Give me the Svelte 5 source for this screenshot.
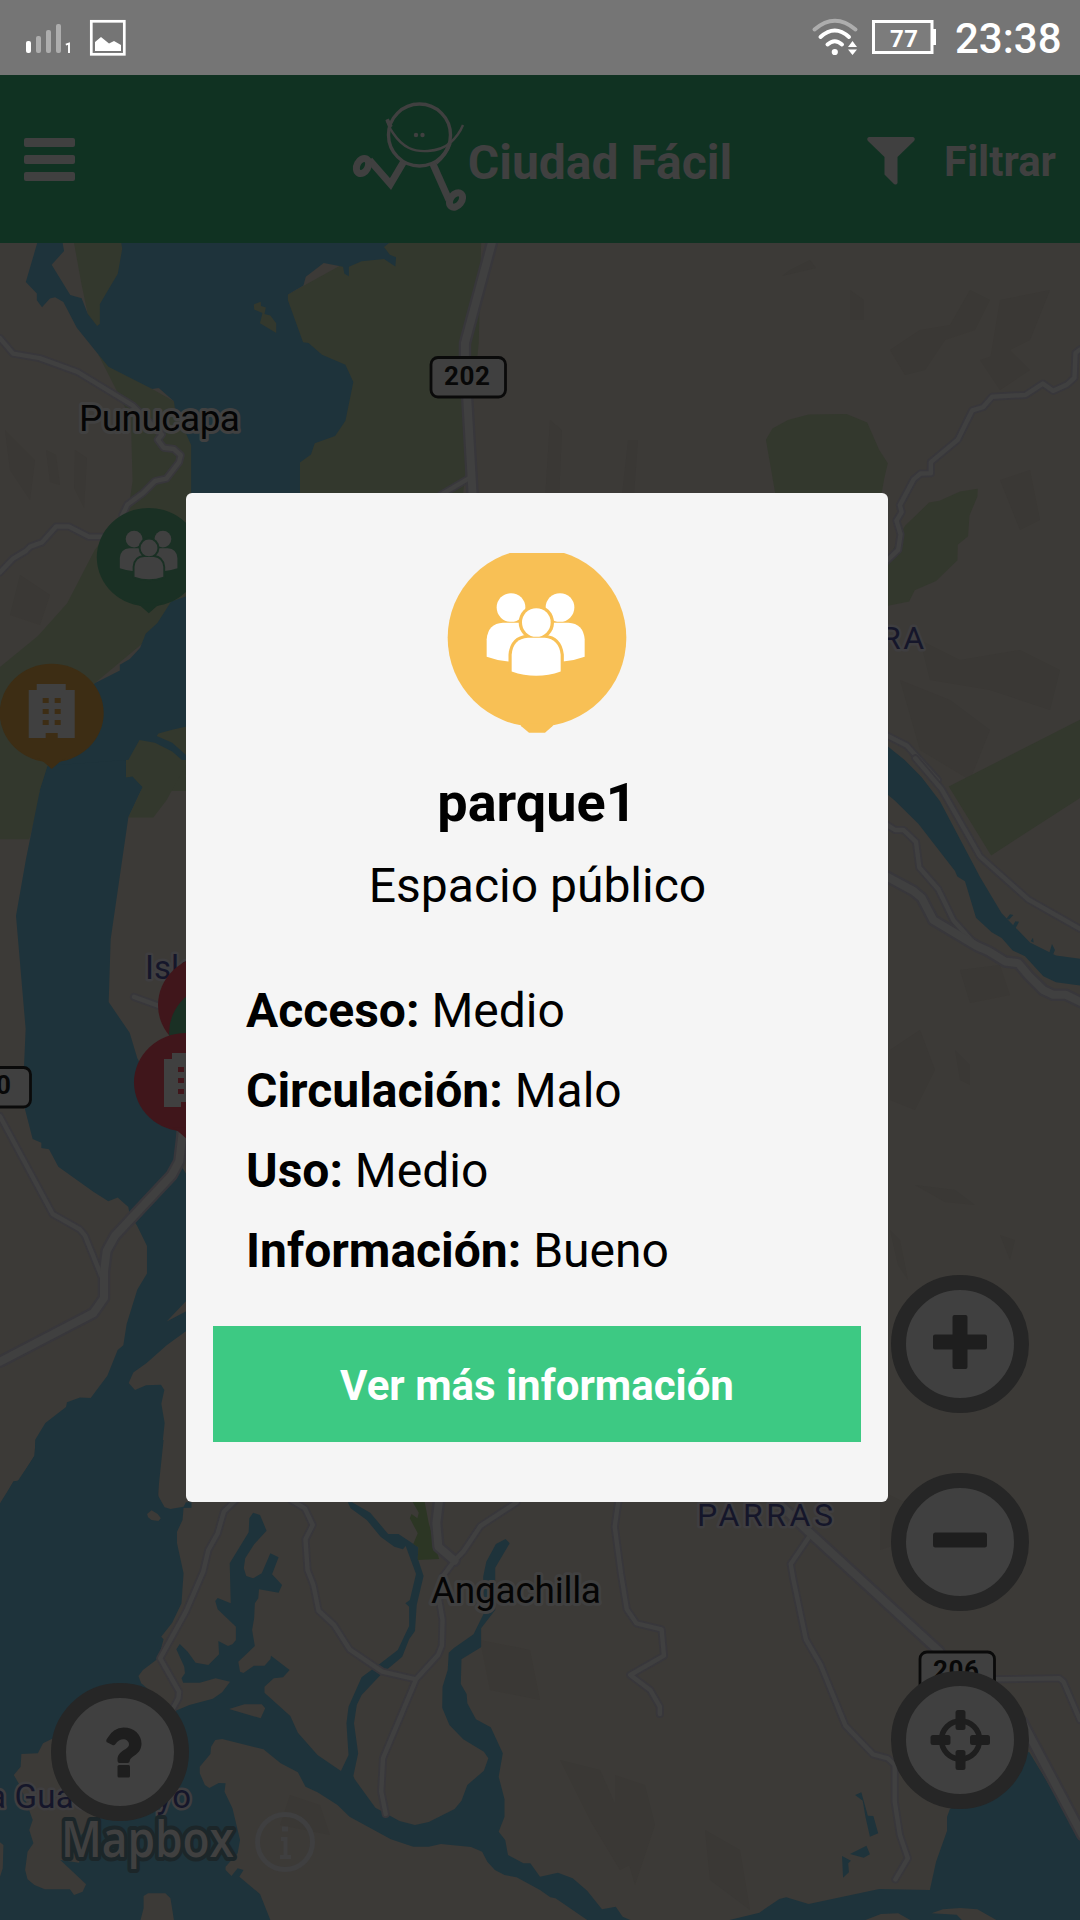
<script>
  const place = {
    name: 'parque1',
    type: 'Espacio público',
    ratings: [
      { label: 'Acceso', value: 'Medio' },
      { label: 'Circulación', value: 'Malo' },
      { label: 'Uso', value: 'Medio' },
      { label: 'Información', value: 'Bueno' }
    ]
  };
</script>

{#snippet people(bg, fg)}
  <g fill={fg}>
    <circle cx="274" cy="232" r="43" />
    <circle cx="421" cy="232" r="43" />
    <path d="M201 380V328Q205 280 250 278H300L345 320V394H266Q233 392 201 380z" />
    <path d="M495 380V328Q491 280 446 278H396L351 320V394H430Q463 392 495 380z" />
    <circle cx="350" cy="277" r="53" fill={bg} />
    <path d="M276 424V374Q280 326 325 323H375Q418 327 423 374V424Q350 450 276 424z" stroke={bg} stroke-width="19" />
    <path d="M276 424V374Q280 326 325 323H375Q418 327 423 374V424Q350 450 276 424z" />
    <circle cx="350" cy="277" r="43" />
  </g>
{/snippet}

{#snippet building(bg)}
  <path d="M-23 -23H-15V-29H14V-23H23V25H-23z" fill="#404040" />
  <path d="M-9 -15h6v5h-6zM3 -15h6v5h-6zM-9 -4h6v5h-6zM3 -4h6v5h-6zM-9 7h6v5h-6zM3 7h6v5h-6zM-6 20h12v5h-12z" fill={bg} />
{/snippet}

{#snippet pin(x, y, color)}
  <g transform="translate({x} {y})" fill={color}>
    <ellipse rx="52" ry="49.3" />
    <path d="M-14 45L-8 49L0 56L8 49L14 45z" />
  </g>
{/snippet}

<div class="screen">
  <div class="status">
    <svg class="st" width="130" height="75" viewBox="0 0 130 75">
      <rect x="26" y="41" width="5" height="12" rx="2" fill="#fff" />
      <rect x="36" y="36" width="5" height="17" rx="2" fill="#adadad" />
      <rect x="46" y="30" width="5" height="23" rx="2" fill="#adadad" />
      <rect x="56" y="24" width="5" height="29" rx="2" fill="#adadad" />
      <path d="M65.8 44.6L69 43.6V53" fill="none" stroke="#fff" stroke-width="1.9" />
      <rect x="91.3" y="21.3" width="33" height="33" fill="none" stroke="#fff" stroke-width="2.7" />
      <path d="M95 51V42L101 37L109 43.5L114 41L121 45V51z" fill="#fff" />
    </svg>
    <svg class="st" width="130" height="75" viewBox="811 0 130 75">
      <g fill="none" stroke="#fff" stroke-width="4" stroke-linecap="round">
        <path d="M814.500 29.500Q834.800 12 855.500 29.500" stroke="#adadad" />
        <path d="M820.500 37Q834.800 24 849 37" />
        <path d="M827.500 44.500Q834.800 38 842 44.500" />
      </g>
      <circle cx="834.800" cy="52" r="3.100" fill="#fff" />
      <path d="M848 47L852.500 41L857 47zM848 49.500L852.500 55L857 49.500z" fill="#fff" />
      <rect x="873.500" y="21.500" width="58.500" height="31" fill="#7c7c7c" stroke="#fff" stroke-width="3" />
      <path d="M932 29h4v16h-4z" fill="#fff" />
      <text x="890" y="47" class="bat" textLength="28">77</text>
    </svg>
    <span class="clock">23:38</span>
  </div>

  <header>
    <svg width="51" height="43" viewBox="0 0 51 43" fill="#404040">
      <rect width="51" height="9" rx="2" /><rect y="17" width="51" height="9" rx="2" /><rect y="34" width="51" height="9" rx="2" />
    </svg>
    <div class="brand">
      <svg width="116" height="112" viewBox="0 0 116 112">
        <g fill="none" stroke="#404040">
          <ellipse cx="67.500" cy="33" rx="31" ry="31" stroke-width="3.400" />
          <path d="M35 17.500Q36 24 41 31C51 46 62 50 76 49Q90 48 98 41Q107 33 111 23" stroke-width="2.400" />
          <path d="M35 17.500L39 25M98 41Q94 53 84 61" stroke-width="3.800" />
          <path d="M51.500 60L38.500 82L17.500 58" stroke-width="7" />
          <ellipse cx="10.500" cy="64" rx="5.500" ry="8" stroke-width="7" transform="rotate(28 10.500 64)" />
          <path d="M80.500 61L97 98" stroke-width="7" />
          <ellipse cx="104" cy="98" rx="5.500" ry="8" stroke-width="7" transform="rotate(38 104 98)" />
        </g>
        <circle cx="64" cy="33" r="2.200" fill="#404040" /><circle cx="70.500" cy="33" r="2.200" fill="#404040" />
      </svg>
      <h1>Ciudad Fácil</h1>
    </div>
    <div class="filter">
      <svg width="48" height="48" viewBox="0 0 48 48"><path d="M2 0H46Q49 1 47 4L30.500 20V46Q29.500 48.500 27 47L17.500 37.500V20L1 4Q-1 1 2 0z" fill="#404040" /></svg>
      <span>Filtrar</span>
    </div>
  </header>

  <main>
    <svg class="map" width="1080" height="1677" viewBox="0 243 1080 1677">
      <rect y="243" width="1080" height="1677" fill="#3c3a37" />
      <!-- terrain shading -->
      <g fill="#3a3835">
        <path d="M550 420l12 10-3 70h-14zM628 440h10l-4 55h-12zM790 270l20-10 6 8-34 8zM850 290l14 10v20h-14zM890 350l30-20 30-5 20-35 20 10-15 30-30 10-20 30-20 5zM1000 300l50-10-20 50-40 20zM980 360l30-10 20 20-30 20z" />
        <path d="M1000 480l30-10 10 50-20 10zM920 640l40 20 60-10 40 20-10 40-60-20-60-10zM900 680l50 20 40 30-20 50-50-30zM960 970l40-5 10 30-40 8zM890 1050l30-20 15 40-20 40-25-10zM955 1050l15 15v20l-10-5zM915 1185l40 5 20 15-30-3zM890 1230l10 10 8 40-10-15zM1000 1235l15 5-5 20z" />
        <path d="M5 430l30 30-5 40-20-30zM46 450l10 5 4 30-10-3zM75 450l12 8-3 50-10-20zM20 575l30 20-10 30-30-10zM560 1760l40 10 40 90-20 10-30-50zM615 1775l30 10 10 40-20 60-20-70zM705 1830l35 20 10 60-40-30zM480 1640l50 10 10 50-50-10zM290 1795l30 10 10 30-50-10zM880 1490l40 20 30-10-10 30-60 20z" />
      </g>

      <!-- north west bay and river -->
      <g transform="translate(0 240) scale(.34439)">
        <path fill="#33382d" d="M285 332L335 430L380 520L385 700L375 770L275 900L195 1055L110 1150L0 1240V1740L85 1740L130 1568L275 1287L560 1050V595L505 468L442 433z" />
        <path fill="#33382d" d="M1130 9H1397L1390 300L1345 735H871V646L800 400L836 158L996 70z" />
        <path class="water" d="M108 9L75 122L107 155V175L122 195L145 170L160 166L184 180L223 255L285 332L315 368L442 433L461 430L505 468L508 490L555 595V1030L497 1050L457 1112L423 1143L407 1184L377 1217L348 1233V1250L275 1287L180 1450L137 1530L115 1600H600V800H871V646L903 623L914 590L973 569L1003 525L1026 412L1003 362L935 333L896 299L880 297L836 175V158L881 132L888 107L940 67L996 78L1000 98L1013 105V78L1050 62L1115 55L1148 77L1150 50L1132 43L1115 20L1130 9z" />
        <path fill="#3c3a37" d="M182 9L186 32L150 72L204 160L237 169L255 215L260 100L240 9z" />
        <path fill="#33382d" d="M215 9L237 130L255 215L282 250L290 243V186L342 98L355 25L352 9zM737 187L757 179L758 192L772 196L768 215L785 219L802 242V270L755 242L762 212L738 202zM455 1440L460 1433L500 1422L545 1412V1500L500 1460zM405 1452L450 1460L500 1485L540 1520V1600H385V1555L365 1558V1523z" />
        <path class="case" d="M0 285L38 330L115 343L225 383L385 480L470 565L458 580L475 603L505 607L525 625L520 645L483 693L450 700L415 735L370 768L355 800M0 965L38 925L75 903L88 890L122 878L163 832H200L258 862H300M1280 740L1365 690" />
        <path class="case major" d="M1428 9L1350 300V340L1372 735" />
        <path class="line" d="M0 285L38 330L115 343L225 383L385 480L470 565L458 580L475 603L505 607L525 625L520 645L483 693L450 700L415 735L370 768L355 800M0 965L38 925L75 903L88 890L122 878L163 832H200L258 862H300M1280 740L1365 690" />
        <path class="line major" d="M1428 9L1350 300V340L1372 735" />
      </g>

      <!-- north east hills -->
      <g transform="translate(540 240) scale(.34439)">
        <path fill="#33382d" d="M656 580L675 547L720 523L780 507L890 505L950 530L985 610L1010 648L1000 690L992 735H683zM1060 830L1130 762L1160 757L1220 730L1271 722L1270 745L1247 800L1243 860L1213 885L1212 930L1150 990L1088 1017L1072 1050L1010 1062V930zM1568 1393L1187 1587L1310 1787L1568 1620z" />
        <path class="case" d="M1568 318L1555 328L1552 400L1530 420L1490 438L1460 417L1410 450L1313 455L1287 485L1255 495L1213 580L1135 645V677L1105 678L1085 695L1045 770L1050 790L1035 815L1047 855L1040 900L1000 938M1000 1435L1065 1468L1155 1568" />
        <path class="line" d="M1568 318L1555 328L1552 400L1530 420L1490 438L1460 417L1410 450L1313 455L1287 485L1255 495L1213 580L1135 645V677L1105 678L1085 695L1045 770L1050 790L1035 815L1047 855L1040 900L1000 938M1000 1435L1065 1468L1155 1568" />
      </g>

      <!-- western channel -->
      <g transform="translate(0 760) scale(.33333 .47192)">
        <path class="water" d="M145 12L118 70L78 210L48 330L77 570L72 650L75 740L98 803L124 811V822L147 825L175 862L280 915L325 935L353 927L385 947L388 960L412 988L441 1030V1088L412 1122L380 1195L370 1240L353 1250L322 1305L272 1352L240 1351L201 1361L198 1371L136 1405L106 1440L104 1473L58 1527L40 1529L0 1580H475V1530L494 1405L484 1364L493 1335L483 1324L438 1325L405 1335L386 1320L400 1298L440 1278L500 1240L570 1204V1164L500 1190L570 1138V890L548 865L530 830V780L412 632L389 578L326 513L332 380L385 122L428 57L398 35L378 37V0z" />
        <path fill="#33382d" d="M378 0V37L398 35L428 57L385 122H460L500 85L558 10V0z" />
        <path class="case" d="M0 755L158 962L240 995L255 1008L305 1095M402 502L480 522" />
        <path class="case major" d="M0 1275L280 1172L312 1140V1085L320 1040L345 1008L515 880L538 850L548 790" />
        <path class="line" d="M0 755L158 962L240 995L255 1008L305 1095M402 502L480 522" />
        <path class="line major" d="M0 1275L280 1172L312 1140V1085L320 1040L345 1008L515 880L538 850L548 790" />
      </g>

      <!-- eastern river -->
      <g transform="translate(870 760) scale(.33333 .34439)">
        <path class="water" d="M50 -42L104 0L155 50L210 120L330 340L395 445L480 530L558 568L630 577V655L558 645L520 628L465 570L428 553L395 517L365 500L318 458L285 352L262 338L255 322L145 185L75 118L50 98zM410 460L420 448L430 450L417 464zM428 482L436 468L447 470L437 488zM482 526L489 516L491 530zM538 560L546 534L555 552L548 568z" />
        <path class="case" d="M136 -5L215 85L330 280L475 405L630 490M50 188L75 203H100L138 238L148 312L205 375L250 465L310 530" />
        <path class="case major" d="M50 338L130 380L155 400L190 465L320 540L355 555L405 585L445 590L475 625L520 668L550 682H588L635 704" />
        <path class="line" d="M136 -5L215 85L330 280L475 405L630 490M50 188L75 203H100L138 238L148 312L205 375L250 465L310 530" />
        <path class="line major" d="M50 338L130 380L155 400L190 465L320 540L355 555L405 585L445 590L475 625L520 668L550 682H588L635 704" />
      </g>

      <!-- southern estuary -->
      <g transform="translate(0 1440) scale(.34439 .33333)">
        <path class="water" d="M104 0L100 48L52 122L40 124L0 190V1440H785L755 1362L695 1310L707 1290L690 1285L672 1308L655 1290V1280L690 1240L697 1200L675 1105L652 1055L655 1030L635 1029L608 1044L595 1035L580 1000V980L611 942L613 920L625 900L645 897L765 928L815 970L865 997L887 1040L922 1057L980 1095L1015 1130L1135 1198L1200 1220H1245L1280 1212L1368 1221L1400 1235L1415 1265L1437 1290L1465 1305L1500 1312L1568 1350L1598 1372L1613 1375L1705 1440H1830L1808 1430L1788 1400L1748 1408L1705 1352L1663 1315L1620 1298L1568 1310L1540 1270H1520L1475 1245L1467 1200L1448 1175L1465 1130V1078L1448 1010L1460 940L1425 862L1382 838L1357 790L1355 762L1338 732L1340 658L1397 622V565L1438 510V383L1480 310L1468 297L1440 312L1412 365L1403 410L1405 520L1375 583L1317 625L1303 638L1300 690L1285 740L1284 803L1305 855L1345 898L1405 935L1418 955L1405 992L1357 1035L1340 1082L1320 1107L1245 1146L1205 1155L1160 1143L1090 1103L1030 1018L1026 1008L1040 940L1028 850L1036 795L1050 765L1105 705L1168 650L1188 598L1205 573L1210 495L1230 408L1213 355L1215 322L1157 282H1127L1075 218L1022 187H1010L1018 205L1065 240L1105 290L1145 320L1170 328L1178 318L1208 402L1190 480L1177 490L1188 500V558L1155 630L1105 670L1050 712L1012 800L1006 850L1012 945L990 993L922 945L865 878L843 828L768 758V740L795 715L822 712L841 690L787 647L785 658L768 677H737L707 699L697 695L692 665L740 618L732 570L738 535L740 490L750 475L752 448L809 458L819 435L790 403L809 352L785 340L760 400L735 415L715 408L708 385L712 355L738 313L774 272L755 225L735 218L724 235L722 277L667 370L670 490L632 474L625 483L632 508L685 560V600L675 613L662 618L634 603L636 643L605 675L568 668L545 635L522 612L512 628L535 680L537 700L527 715L532 728H580L626 715L668 725L645 757L618 776L550 795L515 810H500L410 730L402 708L415 690L460 655L475 598L468 590L500 548L527 490L533 400L514 310V275L530 240L533 204L556 203V187H540L533 200L495 207L478 202L458 165L475 0z" />
        <path fill="#3c3a37" d="M427 222L440 211L458 222L467 235L460 243L440 240L430 232zM665 807L710 793H760L770 805L757 835zM150 897L125 910L110 940L62 942L60 980L40 1005L60 1040L95 1140L85 1170L97 1210L80 1235L73 1290L80 1318L100 1335L130 1348H203L215 1365L240 1355L250 1333L175 1260L230 1268V1190L290 1130L300 1000L200 880zM0 1207L10 1215L8 1285L0 1310zM417 1368L430 1360H480L495 1375L505 1440H408L417 1405z" />
        <path fill="#2c3624" d="M1195 180H1232L1245 250L1275 357L1213 360L1215 322L1200 312L1213 280L1190 235L1195 222L1212 235L1216 218z" />
        <path class="case" d="M685 180L650 215L632 280L605 330L590 395L540 515L465 655L520 755L518 775L500 810M845 180L885 205L908 255L887 298L893 390L910 435L925 512L970 555L1015 628L1110 695L1208 718M1500 187L1395 258L1345 335L1320 362L1285 410L1275 480L1285 540L1283 617L1272 645L1208 718L1112 955L1107 1055L1120 1122" />
        <path class="case major" d="M1275 180L1267 250L1273 320L1320 362" />
        <path class="line" d="M685 180L650 215L632 280L605 330L590 395L540 515L465 655L520 755L518 775L500 810M845 180L885 205L908 255L887 298L893 390L910 435L925 512L970 555L1015 628L1110 695L1208 718M1500 187L1395 258L1345 335L1320 362L1285 410L1275 480L1285 540L1283 617L1272 645L1208 718L1112 955L1107 1055L1120 1122" />
        <path class="line major" d="M1275 180L1267 250L1273 320L1320 362" />
      </g>

      <!-- south east shore -->
      <g transform="translate(540 1440) scale(.34439 .33333)">
        <path class="water" d="M1190 1108L1182 1130V1172L1150 1265L1132 1350L985 1347L780 1392L715 1372L695 1377L637 1418L550 1440H1568V1190L1420 935L1300 1000zM915 1065L933 1057L952 1127L968 1128L982 1180L958 1190L945 1130L937 1082zM900 1242L948 1217L958 1243L940 1253zM877 1248L903 1262L895 1270L897 1297L880 1313z" />
        <path fill="#3c3a37" d="M945 1440L990 1422L1040 1420L1075 1440zM1137 1420L1170 1408L1220 1404L1270 1408L1325 1440H1225L1210 1424z" />
        <path class="case" d="M228 180L217 260L235 400L252 508L280 550L353 568L360 647L262 705L320 750L348 800V822M785 285L728 372L735 415L772 598L815 675L887 857L967 943L1010 955L1030 975V1085L1045 1185L1068 1255L1032 1318M1325 718L1508 715L1520 725L1568 840" />
        <path class="case major" d="M690 187L785 280L1160 635M1400 845L1575 1185" />
        <path class="line" d="M228 180L217 260L235 400L252 508L280 550L353 568L360 647L262 705L320 750L348 800V822M785 285L728 372L735 415L772 598L815 675L887 857L967 943L1010 955L1030 975V1085L1045 1185L1068 1255L1032 1318M1325 718L1508 715L1520 725L1568 840" />
        <path class="line major" d="M690 187L785 280L1160 635M1400 845L1575 1185" />
      </g>

      <g class="shields">
        <rect x="431" y="357.500" width="74.500" height="39.500" rx="7" />
        <text x="444" y="384.500" textLength="46">202</text>
        <rect x="920" y="1652" width="74.500" height="39.500" rx="7" />
        <text x="933" y="1679" textLength="46">206</text>
        <rect x="-44" y="1067.500" width="74.500" height="39.500" rx="7" />
        <text x="-35" y="1094" textLength="46">200</text>
      </g>

      <g class="labels">
        <text x="79" y="430.500" textLength="161">Punucapa</text>
        <text x="431" y="1603" textLength="170">Angachilla</text>
        <g class="area">
          <text x="697" y="1526" textLength="136">PARRAS</text>
          <text x="881" y="649" textLength="43">RA</text>
          <text x="145" y="978.500" class="isle">Isla</text>
          <text x="-12" y="1808" textLength="203" class="isle">a Guacamayo</text>
        </g>
      </g>

      <!-- place markers -->
      {@render pin(210, 1005, '#40161b')}
      {@render pin(221, 1033, '#1a3024')}
      {@render pin(186, 1082.300, '#40161b')}
      <g transform="translate(187 1082)">{@render building('#40161b')}</g>
      {@render pin(51.700, 713, '#3d2d14')}
      <g transform="translate(51.700 713)">{@render building('#3d2d14')}</g>
      {@render pin(148.800, 557.300, '#1a3024')}
      <g transform="translate(148.800 555) scale(.196) translate(-349 -313)">{@render people('#1a3024', '#404040')}</g>

      <text class="mapbox" x="61" y="1857" textLength="173" lengthAdjust="spacingAndGlyphs">Mapbox</text>
      <g fill="none" stroke="#3f3f40" stroke-width="5">
        <circle cx="285" cy="1842" r="27.500" />
        <path d="M281 1839h4.500v16M280 1857h11" stroke-width="4" /><path d="M282 1829h6" />
      </g>
    </svg>

    <div class="controls">
      <button aria-label="Acercar"><svg width="60" height="60" viewBox="-30 -30 60 60"><path d="M-27 -7.500q0 -2 2 -2H-7.500V-27q0 -2 2 -2H5.500q2 0 2 2V-9.500H25q2 0 2 2V3.500q0 2 -2 2H7.500V23q0 2 -2 2H-5.500q-2 0 -2 -2V5.500H-25q-2 0 -2 -2z" /></svg></button>
      <button aria-label="Alejar"><svg width="60" height="60" viewBox="-30 -30 60 60"><rect x="-27" y="-9.500" width="54" height="15" rx="2.500" /></svg></button>
      <button aria-label="Mi ubicación">
        <svg width="60" height="60" viewBox="-30 -30 60 60"><circle cx=".5" r="19" fill="none" stroke="#1e1e1e" stroke-width="5.500" /><rect x="-4.500" y="-30" width="10" height="20" rx="2.500" /><rect x="-4.500" y="10" width="10" height="20" rx="2.500" /><rect x="-29.500" y="-5" width="20" height="10" rx="2.500" /><rect x="10" y="-5" width="20" height="10" rx="2.500" /></svg>
      </button>
    </div>
    <button class="help" aria-label="Ayuda">
      <svg width="60" height="60" viewBox="88.500 1722 60 60"><path d="M105 1742Q104 1740 106 1738Q112 1727.500 122 1727.500C133 1727.500 140 1735 140 1743.500C140 1755 128.500 1756 128.300 1761Q128 1763 126 1763H118Q116 1763 116 1760C116 1750 127.500 1750 127.500 1744.500C127.500 1738 118 1737 114 1744Q112.500 1746 111 1745z" /><rect x="116" y="1765" width="12.500" height="12.500" rx="1.500" /></svg>
    </button>
  </main>

  <section class="modal">
    <svg width="180" height="180" viewBox="82 69 540 539">
      <ellipse cx="352" cy="323" rx="268" ry="267" fill="#f8c055" />
      <path d="M300 580L305 588L328 608H376L398 588L405 580z" fill="#f8c055" />
      {@render people('#f8c055', '#fff')}
    </svg>
    <h2>{place.name}</h2>
    <p class="type">{place.type}</p>
    <ul>
      {#each place.ratings as r}
        <li><b>{r.label}:</b> {r.value}</li>
      {/each}
    </ul>
    <button class="more">Ver más información</button>
  </section>
</div>

<style>
  :global(body) { margin: 0; background: #3c3a37; }
  .screen { position: relative; width: 1080px; height: 1920px; overflow: hidden; display: flex; flex-direction: column; font-family: Roboto, sans-serif; }
  .status { flex: none; height: 75px; background: #757575; display: flex; align-items: center; box-sizing: border-box; padding-right: 19px; }
  .st { display: block; }
  .st + .st { margin-left: auto; }
  .bat { font: 700 24px Roboto, sans-serif; fill: #fff; }
  .clock { margin-left: 14px; width: 106px; color: #fff; font-size: 42px; font-weight: 500; line-height: 50px; padding-top: 3px; box-sizing: border-box; white-space: nowrap; }
  header { flex: none; height: 168px; box-sizing: border-box; padding: 0 24px; background: #103222; display: grid; grid-template-columns: 1fr auto 1fr; align-items: center; color: #404040; }
  .brand { display: flex; align-items: center; padding-left: 4px; }
  .brand svg { margin-top: -2px; }
  h1 { margin: 7px 0 0; font-size: 48px; line-height: 56px; font-weight: 700; white-space: nowrap; }
  .filter { display: flex; justify-content: flex-end; align-items: center; gap: 29px; font-size: 42px; font-weight: 700; line-height: 50px; }
  .filter svg { margin-top: 3px; }
  .filter span { margin-top: 5px; }
  main { position: relative; flex: 1; overflow: hidden; }
  .map { display: block; }
  .water { fill: #1e333b; }
  .case, .line { fill: none; stroke-linejoin: round; stroke-linecap: round; vector-effect: non-scaling-stroke; }
  .case { stroke: #38373b; stroke-width: 8px; }
  .line { stroke: #404040; stroke-width: 4.500px; }
  .case.major { stroke-width: 12.500px; }
  .line.major { stroke-width: 8px; }
  .shields rect { fill: #404040; stroke: #0a0a0a; stroke-width: 2.800px; }
  .shields text { font: 700 26px Roboto, sans-serif; fill: #080808; }
  .labels text { font: 400 37px Roboto, sans-serif; fill: #050505; stroke: #414141; stroke-width: 6px; stroke-linejoin: round; paint-order: stroke; }
  .labels .area text { font-size: 32px; fill: #15162a; stroke: #3f3e40; stroke-width: 5px; }
  .labels .area .isle { font-size: 33px; }
  .mapbox { font: 600 50px "Open Sans", sans-serif; fill: #404040; stroke: #1c2629; stroke-width: 8px; stroke-linejoin: round; paint-order: stroke; }
  .controls { position: absolute; left: 891px; top: 1032px; display: flex; flex-direction: column; gap: 60px; }
  .controls button, .help { width: 138px; height: 138px; box-sizing: border-box; padding: 0; border: 15px solid #262626; border-radius: 50%; background: #404040; display: flex; align-items: center; justify-content: center; }
  .controls svg, .help svg { display: block; fill: #1e1e1e; }
  .help { position: absolute; left: 51px; top: 1440px; }
  .modal { position: absolute; left: 186px; top: 493px; width: 702px; height: 1009px; box-sizing: border-box; padding: 60px 27px 0; border-radius: 6px; background: #f5f5f5; color: #000; display: flex; flex-direction: column; align-items: center; }
  .modal > svg { display: block; flex: none; }
  h2 { margin: 38px 0 0; font-size: 54px; line-height: 64px; font-weight: 700; }
  .type { margin: 23px 0 0 1px; font-size: 48px; line-height: 56px; }
  ul { list-style: none; align-self: stretch; margin: 57px 0 0; padding: 0 33px; font-size: 48px; }
  li { line-height: 80px; white-space: nowrap; }
  .more { align-self: stretch; flex: none; margin-top: 35px; height: 116px; padding: 2px 0 0; border: 0; background: #3dc983; color: #fff; font: 700 42px Roboto, sans-serif; }
</style>
